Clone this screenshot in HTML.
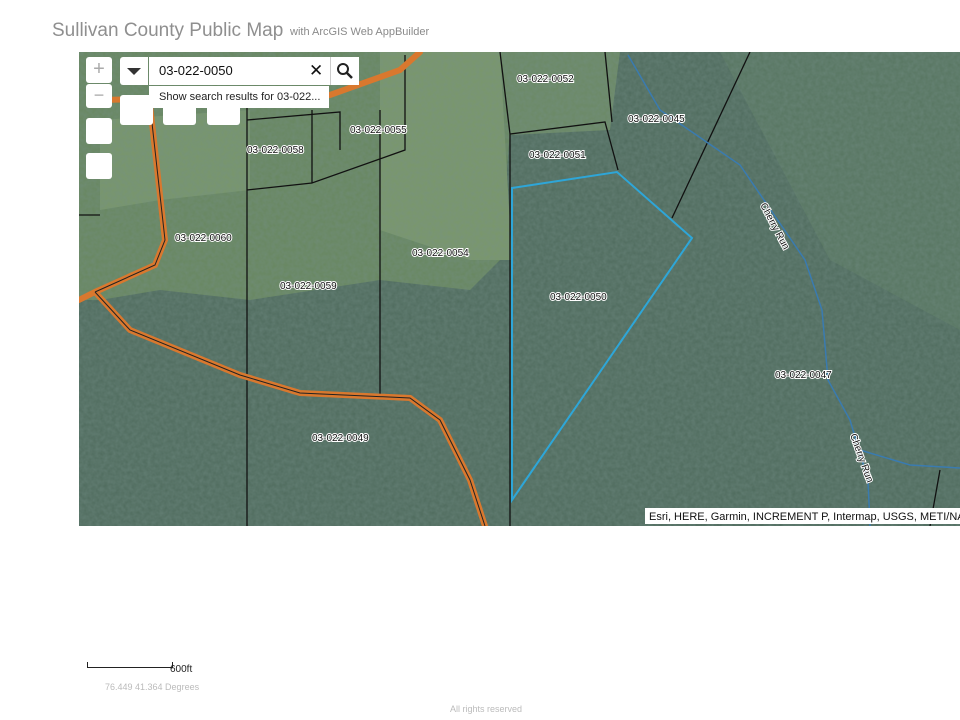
<!DOCTYPE html>
<html><head><meta charset="utf-8"><style>
body{margin:0;width:960px;height:720px;background:#fff;position:relative;overflow:hidden;font-family:"Liberation Sans",sans-serif}
.t{position:absolute;top:20px;left:52px;font-size:19px;color:#8f8f8f}
.s{position:absolute;top:26px;left:290px;font-size:11px;color:#8a8a8a}
#map{position:absolute;left:79px;top:52px;width:881px;height:474px}
.btn{position:absolute;background:#fff;border-radius:3px}
</style></head><body>
<div class="t">Sullivan County Public Map</div>
<div class="s">with ArcGIS Web AppBuilder</div>
<svg id="map" width="881" height="474" viewBox="79 52 881 474">
<defs><filter id="n"><feTurbulence type="fractalNoise" baseFrequency="0.25" numOctaves="2" seed="3"/><feColorMatrix values="0 0 0 0 0.18  0 0 0 0 0.28  0 0 0 0 0.25  0 0 0 0.5 0"/></filter></defs>
<rect x="79" y="52" width="881" height="474" fill="#4f6b5d"/>
<polygon points="79,52 500,52 510,130 500,260 470,290 380,280 250,300 160,290 100,300 79,300" fill="#68875f"/>
<polygon points="380,52 500,52 512,260 470,260 380,230" fill="#7a976a"/>
<polygon points="100,120 250,110 250,190 160,200 100,210" fill="#78966a"/>
<polygon points="500,52 620,52 610,130 510,135" fill="#6b8964"/>
<polygon points="720,52 960,52 960,330 830,260" fill="#577560"/>
<rect x="79" y="52" width="881" height="474" filter="url(#n)"/>
<g fill="none" stroke="#111" stroke-width="1.3">
<path d="M247 100 V526 M380 110 V395 M405 55 V150 L312 183 V110 M247 190 L312 183 M500 52 L510 134 L605 122 L618 170 M510 134 V526 M605 52 L612 122 M750 52 L672 218 M940 470 L930 526 M247 120 L340 112 L340 150 M79 215 L100 215"/>
</g>
<g fill="none" stroke="#d9782e" stroke-width="6" stroke-linecap="round">
<path d="M150 105 L165 240 L155 265 L95 292 L79 300 M95 292 L130 330 L240 375 L300 393 L410 398 L440 420 L470 480 L485 526 M100 100 L330 95 L400 70 L420 52"/>
</g>
<g fill="none" stroke="#222" stroke-width="1"><path d="M150 105 L165 240 L155 265 L95 292 M95 292 L130 330 L240 375 L300 393 L410 398 L440 420 L470 480 L485 526"/></g>
<path d="M512 188 L617 172 L692 238 L512 500 Z" fill="none" stroke="#2ea6d8" stroke-width="2"/>
<path d="M628 55 L660 110 L740 165 L805 260 L822 310 L828 380 L850 420 L868 480 L870 526 M860 450 L910 465 L960 468" fill="none" stroke="#3a7bb0" stroke-width="1.5"/>
<g font-size="10" fill="#111" stroke="#fff" stroke-width="2" paint-order="stroke" font-family="Liberation Sans">
<text x="517" y="82">03-022-0052</text><text x="628" y="122">03-022-0045</text>
<text x="350" y="133">03-022-0055</text><text x="247" y="153">03-022-0058</text>
<text x="529" y="158">03-022-0051</text><text x="175" y="241">03-022-0060</text>
<text x="412" y="256">03-022-0054</text><text x="280" y="289">03-022-0059</text>
<text x="550" y="300">03-022-0050</text><text x="775" y="378">03-022-0047</text>
<text x="312" y="441">03-022-0049</text>
<text transform="translate(760,205) rotate(62)">Cherry Run</text>
<text transform="translate(850,435) rotate(70)">Cherry Run</text>
</g>
<rect x="645" y="508" width="315" height="16" fill="#fff"/>
<text x="649" y="520" font-size="11" fill="#111">Esri, HERE, Garmin, INCREMENT P, Intermap, USGS, METI/NA</text>
</svg>
<div class="btn" style="left:86px;top:57px;width:26px;height:26px;color:#aaa;font-size:20px;text-align:center;line-height:24px">+</div>
<div class="btn" style="left:86px;top:84px;width:26px;height:24px;color:#aaa;font-size:18px;text-align:center;line-height:22px">−</div>
<div class="btn" style="left:86px;top:118px;width:26px;height:26px"></div>
<div class="btn" style="left:86px;top:153px;width:26px;height:26px"></div>
<div class="btn" style="left:120px;top:57px;width:28px;height:28px;border-radius:3px 0 0 3px"><div style="margin:11px 0 0 7px;width:0;height:0;border-left:7px solid transparent;border-right:7px solid transparent;border-top:7px solid #333"></div></div>
<div style="position:absolute;left:149px;top:57px;width:181px;height:28px;background:#fff;font-size:13px;line-height:28px;color:#111"><span style="margin-left:10px">03-022-0050</span><span style="position:absolute;left:160px;font-size:17px">✕</span></div>
<div style="position:absolute;left:330px;top:57px;width:28px;height:28px;background:#fff;border-left:1px solid #ccc"><svg width="28" height="28"><circle cx="12" cy="12" r="5" fill="none" stroke="#222" stroke-width="2"/><path d="M16 16 L21 21" stroke="#222" stroke-width="2.5"/></svg></div>
<div style="position:absolute;left:149px;top:86px;width:180px;height:22px;background:#fff;font-size:11px;color:#222;line-height:22px"><span style="margin-left:10px">Show search results for 03-022...</span></div>
<div class="btn" style="left:120px;top:95px;width:33px;height:30px"></div>
<div class="btn" style="left:163px;top:100px;width:33px;height:25px"></div>
<div class="btn" style="left:207px;top:100px;width:33px;height:25px"></div>
<div style="position:absolute;left:87px;top:662px;width:84px;height:5px;border:1px solid #222;border-top:none"></div>
<div style="position:absolute;left:170px;top:664px;font-size:10px;color:#222">600ft</div>
<div style="position:absolute;left:105px;top:682px;font-size:9px;color:#bbb">76.449 41.364 Degrees</div>
<div style="position:absolute;left:450px;top:704px;font-size:9px;color:#bbb">All rights reserved</div>
</body></html>
